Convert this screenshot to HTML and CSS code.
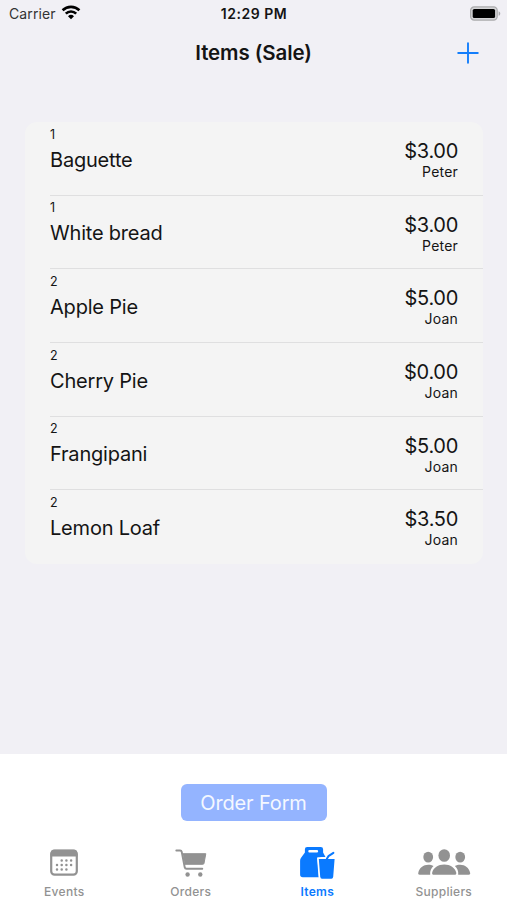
FILE: index.html
```html
<!DOCTYPE html>
<html lang="en">
<head>
  <meta charset="UTF-8" />
  <meta name="viewport" content="width=device-width, initial-scale=1.0" />
  <title>Items (Sale)</title>
  <link rel="stylesheet" href="styles.css">
</head>
<body>
  <div class="status-bar">
    <div class="carrier">
      <span>Carrier</span>
      <svg class="wifi" width="20" height="15" viewBox="0 0 20 15" fill="none" stroke="#000" stroke-width="2.6">
        <path d="M1.6 5.3a12 12 0 0 1 16.8 0" />
        <path d="M4.8 8.7a7.4 7.4 0 0 1 10.4 0" />
        <path d="M10 14.2 7 11.2a4.3 4.3 0 0 1 6 0z" fill="#000" stroke="none" />
      </svg>
    </div>
    <div class="time">12:29 PM</div>
    <svg class="battery" width="32" height="15" viewBox="0 0 32 15">
      <rect x="1.6" y="0.9" width="26.6" height="13.2" rx="3.6" fill="#d4d4d6" stroke="#aaaaac" stroke-width="1.2" />
      <rect x="3.7" y="3" width="22.4" height="9" rx="1.6" fill="#000" />
      <path d="M29.6 5.2c2.2.8 2.2 3.8 0 4.6z" fill="#aaaaac" />
    </svg>
  </div>
  <header>
    <h1>Items (Sale)</h1>
    <a class="add" href="#" aria-label="Add item">
      <svg width="22" height="22" viewBox="0 0 22 22" stroke="#147efb" stroke-width="1.9" stroke-linecap="round">
        <path d="M11 1.2v19.6M1.2 11h19.6" />
      </svg>
    </a>
  </header>
  <main>
    <ul class="items">
      <li class="item">
        <div class="info"><span class="qty">1</span><span class="name">Baguette</span></div>
        <div class="cost"><span class="price">$3.00</span><span class="supplier">Peter</span></div>
      </li>
      <li class="item">
        <div class="info"><span class="qty">1</span><span class="name">White bread</span></div>
        <div class="cost"><span class="price">$3.00</span><span class="supplier">Peter</span></div>
      </li>
      <li class="item">
        <div class="info"><span class="qty">2</span><span class="name">Apple Pie</span></div>
        <div class="cost"><span class="price">$5.00</span><span class="supplier">Joan</span></div>
      </li>
      <li class="item">
        <div class="info"><span class="qty">2</span><span class="name">Cherry Pie</span></div>
        <div class="cost"><span class="price">$0.00</span><span class="supplier">Joan</span></div>
      </li>
      <li class="item">
        <div class="info"><span class="qty">2</span><span class="name">Frangipani</span></div>
        <div class="cost"><span class="price">$5.00</span><span class="supplier">Joan</span></div>
      </li>
      <li class="item">
        <div class="info"><span class="qty">2</span><span class="name">Lemon Loaf</span></div>
        <div class="cost"><span class="price">$3.50</span><span class="supplier">Joan</span></div>
      </li>
    </ul>
  </main>
  <footer>
    <button class="btn">Order Form</button>
    <nav>
      <a class="tab" href="#events">
        <svg width="40" height="34" viewBox="0 0 40 34">
          <rect x="7.2" y="4.7" width="25.6" height="24" rx="3.4" fill="none" stroke="#929292" stroke-width="2.2" />
          <path d="M6.6 10.6V7.2a3.4 3.4 0 0 1 3.4-3.4h20a3.4 3.4 0 0 1 3.4 3.4v3.4z" fill="#929292" />
          <path d="M17.7 14.5h.01M22.4 14.5h.01M27.1 14.5h.01M13 19h.01M17.7 19h.01M22.4 19h.01M27.1 19h.01M13 23.5h.01M17.7 23.5h.01M22.4 23.5h.01" stroke="#929292" stroke-width="2.5" stroke-linecap="round" />
        </svg>
        <span>Events</span>
      </a>
      <a class="tab" href="#orders">
        <svg width="40" height="34" viewBox="0 0 40 34" fill="none" stroke="#929292" stroke-width="1.9" stroke-linecap="round" stroke-linejoin="round">
          <path d="M5.3 4.5h3.9c.9 0 1.3.4 1.5 1.2l3 15.500c.2 1.1.8 1.6 1.8 1.6h15.8" />
          <path d="M11.8 7.7h23l-1.8 9.6c-.1.7-.5 1-1.2 1H13.8z" fill="#929292" stroke-width="1" />
          <circle cx="16.6" cy="28.5" r="2.2" fill="#929292" stroke="none" />
          <circle cx="29.3" cy="28.5" r="2.2" fill="#929292" stroke="none" />
        </svg>
        <span>Orders</span>
      </a>
      <a class="tab active" href="#items">
        <svg width="40" height="34" viewBox="0 0 40 34">
          <path d="M7.9 3.3A2.3 2.3 0 0 1 10.2 1h13.6a2.3 2.3 0 0 1 2.3 2.3v3.2l2.4 4.4h-3.9l-4 1.500v2l1.400 16.800H5.8a2.7 2.7 0 0 1-2.7-2.7V15c0-2 .6-3 1.7-4.3l3.1-4.200z" fill="#0a7aff" />
          <rect x="11.3" y="4" width="9.8" height="2.5" rx="1.1" fill="#fff" />
          <path d="M20.9 12.2h17.6l-1.5 19a2.6 2.6 0 0 1-2.6 2.3h-9.4a2.6 2.6 0 0 1-2.6-2.3z" fill="#0a7aff" stroke="#fff" stroke-width="1.7" stroke-linejoin="round" />
          <path d="M29.9 12.8 31.4 10.2l5-3.4" fill="none" stroke="#0a7aff" stroke-width="2" stroke-linecap="round" stroke-linejoin="round" />
        </svg>
        <span>Items</span>
      </a>
      <a class="tab" href="#suppliers">
        <svg width="54" height="34" viewBox="0 0 54 34" fill="#929292">
          <ellipse cx="11.2" cy="11.1" rx="4.9" ry="5.4" />
          <ellipse cx="43.2" cy="11.1" rx="4.9" ry="5.4" />
          <path d="M2.7 28.8c-1.2 0-1.8-.7-1.4-2 1-5 5-8 10-8 2 0 3.7.5 5.2 1.3-2.3 2.2-3.7 4.7-3.3 8.7z" />
          <path d="M51.7 28.8c1.2 0 1.8-.7 1.4-2-1-5-5-8-10-8-2 0-3.7.5-5.2 1.3 2.3 2.2 3.7 4.7 3.3 8.7z" />
          <ellipse cx="27.2" cy="9.5" rx="5.8" ry="6.3" />
          <path d="M17 28.8c-1.5 0-2.2-.9-1.8-2.4 1.1-4.7 6-8 12-8s10.9 3.3 12 8c.4 1.5-.3 2.4-1.8 2.4z" />
        </svg>
        <span>Suppliers</span>
      </a>
    </nav>
  </footer>
</body>
</html>
```
FILE: styles.css
```css
* {
  box-sizing: border-box;
}
body {
  font-family: Inter, "Liberation Sans", sans-serif;
  margin: 0;
  height: 900px;
  overflow: hidden;
  display: flex;
  flex-direction: column;
  background-color: #f1f0f5;
  color: #141414;
}
.status-bar {
  height: 27px;
  padding: 0 6px 0 9px;
  display: grid;
  grid-template-columns: 1fr auto 1fr;
  align-items: center;
  font-size: 14px;
}
.carrier {
  display: flex;
  align-items: center;
  gap: 5px;
  color: #333;
  letter-spacing: 0.1px;
}
.wifi {
  margin-top: -2px;
}
.time {
  margin-right: 2px;
  font-size: 14px;
  font-weight: 600;
  letter-spacing: 0.5px;
}
.battery {
  justify-self: end;
}
header {
  height: 51px;
  padding: 0 28px;
  display: grid;
  grid-template-columns: 1fr auto 1fr;
  align-items: center;
}
h1 {
  grid-column: 2;
  margin: 0;
  font-size: 20.5px;
  font-weight: 600;
  letter-spacing: -0.1px;
}
.add {
  justify-self: end;
  display: flex;
}
main {
  flex: 1;
  padding: 44px 24px 0 25px;
}
.items {
  list-style: none;
  margin: 0;
  padding: 0 0 0 25px;
  border-radius: 12px;
  background-color: #f4f4f4;
}
.item {
  height: 73.7px;
  padding-right: 25px;
  display: flex;
  justify-content: space-between;
  border-bottom: 1px solid #dfdfe0;
}
.item:last-child {
  border-bottom: none;
}
.info,
.cost {
  display: flex;
  flex-direction: column;
}
.info {
  padding-top: 4.5px;
}
.cost {
  padding-top: 16px;
  align-items: flex-end;
}
.qty {
  font-size: 12.5px;
  line-height: 16px;
}
.name,
.price {
  font-size: 20px;
  line-height: 26px;
  letter-spacing: -0.3px;
}
.name {
  margin-top: 4px;
  letter-spacing: -0.2px;
}
.supplier {
  font-size: 14px;
  line-height: 15px;
  letter-spacing: 0.2px;
}
footer {
  height: 146px;
  background-color: #fff;
  display: flex;
  flex-direction: column;
  align-items: center;
}
.btn {
  margin-top: 30px;
  width: 146px;
  height: 37px;
  padding: 0;
  border: none;
  border-radius: 6px;
  background-color: #94b4ff;
  color: #f4f8ff;
  font-family: inherit;
  font-size: 20px;
  letter-spacing: -0.15px;
}
nav {
  width: 100%;
  margin-top: 25px;
  padding-left: 1px;
  display: grid;
  grid-template-columns: repeat(4, 1fr);
}
.tab {
  display: flex;
  flex-direction: column;
  align-items: center;
  gap: 4px;
  font-size: 12px;
  font-weight: 500;
  line-height: 15px;
  letter-spacing: 0.3px;
  color: #929292;
  text-decoration: none;
}
.tab.active {
  color: #0a7aff;
  font-weight: 600;
}
```
